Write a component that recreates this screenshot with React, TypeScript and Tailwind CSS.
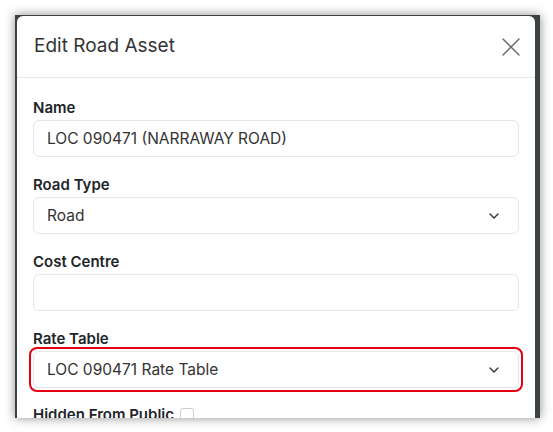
import { X, ChevronDown } from "lucide-react";

function Field({
  label,
  value,
  select,
  highlight,
}: {
  label: string;
  value?: string;
  select?: boolean;
  highlight?: boolean;
}) {
  return (
    <div className="mb-[16px]">
      <label className="mb-px block h-[23px] text-[15px] leading-[23px] font-semibold text-[#212529]">
        {label}
      </label>
      <div className="relative">
        <div className="flex h-[37px] items-center justify-between rounded-[6px] border border-[#e3e6ea] bg-white pr-[16px] pl-[13px] text-[15.5px] text-[#333]">
          <span>{value}</span>
          {select && <ChevronDown size={16} strokeWidth={2.1} className="text-[#333]" />}
        </div>
        {highlight && (
          <div className="pointer-events-none absolute -inset-x-[4px] -inset-y-[4px] rounded-[8px] border-[2.5px] border-[#e3000f]" />
        )}
      </div>
    </div>
  );
}

export default function App() {
  return (
    <div className="h-[432px] w-[553px] bg-white font-['Inter',sans-serif]">
      <div className="pt-[15px] pl-[15px]">
        <div className="h-[403px] w-[525px] overflow-hidden bg-[#3c4142] shadow-[0_0_10px_rgba(0,0,0,0.45)]">
          <div className="mt-px ml-[2px] h-[410px] w-[518px] rounded-t-[6px] bg-white">
            <div className="flex h-[62px] items-center justify-between border-b border-[#e5e7eb] pr-[8px] pl-[17px]">
              <h1 className="text-[19px] font-normal text-[#333]">Edit Road Asset</h1>
              <X size={32} strokeWidth={1.1} className="text-[#6b6b6b]" />
            </div>
            <div className="px-[16px] pt-[18px]">
              <Field label="Name" value="LOC 090471 (NARRAWAY ROAD)" />
              <Field label="Road Type" value="Road" select />
              <Field label="Cost Centre" value="" />
              <Field label="Rate Table" value="LOC 090471 Rate Table" select highlight />
              <div className="flex items-center gap-[6px]">
                <span className="text-[15px] leading-[22px] font-semibold text-[#212529]">Hidden From Public</span>
                <span className="h-[14px] w-[14px] rounded-[3px] border border-[#c9ced4] bg-white" />
              </div>
            </div>
          </div>
        </div>
      </div>
    </div>
  );
}
